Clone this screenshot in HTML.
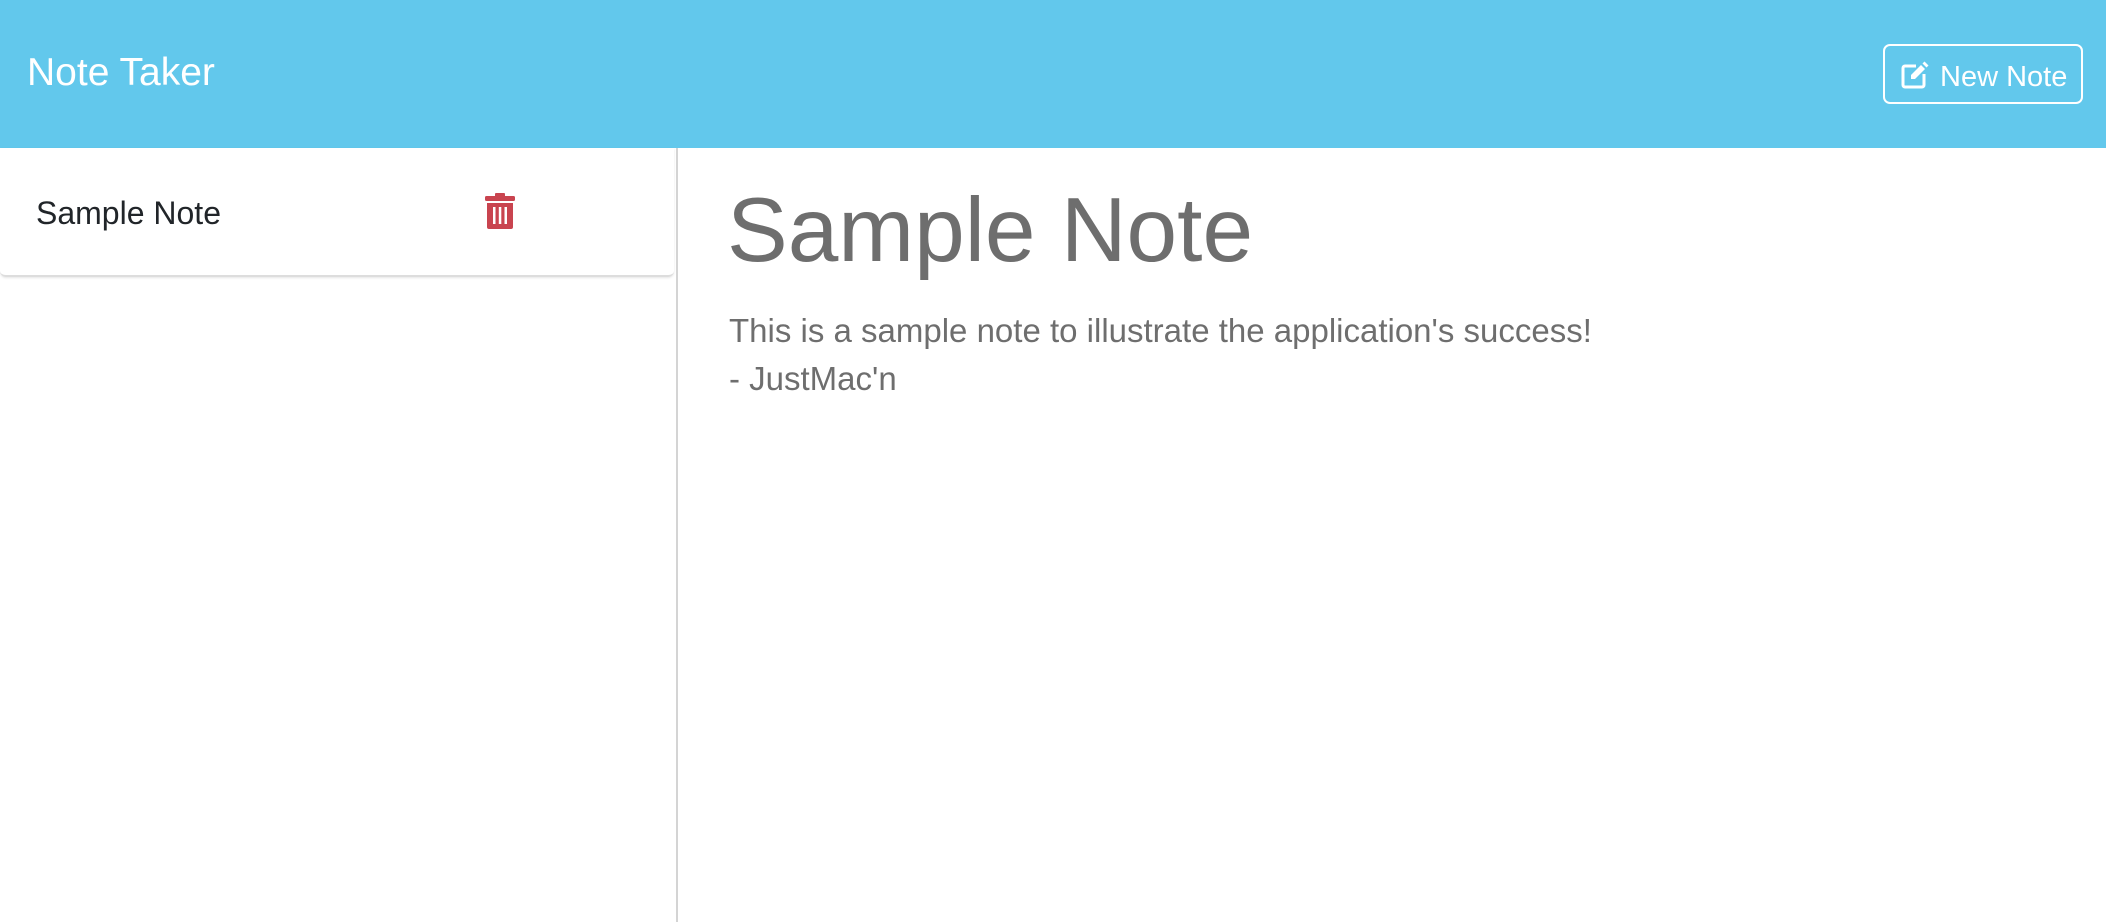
<!DOCTYPE html>
<html><head><style>
body{margin:0;width:2106px;height:922px;overflow:hidden;font-family:"Liberation Sans",sans-serif;background:#fff;position:relative}
.hdr{position:absolute;left:0;top:0;width:2106px;height:148px;background:#62c8ec}
.brand{position:absolute;left:27px;top:51px;font-size:39px;color:#fff}
.btn{position:absolute;left:1883px;top:44px;width:196px;height:56px;border:2px solid #fff;border-radius:7px;color:#fff;font-size:29px;line-height:56px}
.btn svg{position:absolute;left:16px;top:15px}
.btn span{position:absolute;left:55px;top:3px}
.side{position:absolute;left:0;top:148px;width:678px;height:774px;border-right:2px solid #d4d4d4;box-sizing:border-box}
.item{position:absolute;left:0;top:0;width:674px;height:127px;border-bottom:2px solid #ddd;border-radius:0 0 6px 6px;box-shadow:0 1px 2px rgba(0,0,0,.1)}
.item .t{position:absolute;left:36px;top:47px;font-size:32px;color:#212529}
.item svg{position:absolute;left:484px;top:45px}
h1{position:absolute;left:727px;top:185px;margin:0;font-weight:normal;font-size:91px;color:#6e6e6e;line-height:1}
.body{position:absolute;left:729px;top:307px;font-size:33px;line-height:48px;color:#6e6e6e}
</style></head><body>
<div class="hdr"><div class="brand">Note Taker</div>
<div class="btn"><svg width="28" height="28" viewBox="0 0 28 28"><path d="M15 5H4a2 2 0 0 0-2 2v17a2 2 0 0 0 2 2h17a2 2 0 0 0 2-2V13" fill="none" stroke="#fff" stroke-width="3"/><path d="M10 14l10-10 4 4-10 10h-4z" fill="#fff"/><path d="M21.5 2.5l2-2 4 4-2 2z" fill="#fff"/></svg><span>New Note</span></div></div>
<div class="side"><div class="item"><div class="t">Sample Note</div>
<svg width="32" height="36" viewBox="0 0 32 36"><rect x="1" y="3" width="30" height="5" rx="1.5" fill="#c9444f"/><rect x="11" y="0" width="10" height="4" rx="1" fill="#c9444f"/><path d="M3 10h26v24a2 2 0 0 1-2 2H5a2 2 0 0 1-2-2z" fill="#c9444f"/><rect x="9" y="14" width="2.5" height="17" fill="#fff"/><rect x="14.8" y="14" width="2.5" height="17" fill="#fff"/><rect x="20.5" y="14" width="2.5" height="17" fill="#fff"/></svg></div></div>
<h1>Sample Note</h1>
<div class="body">This is a sample note to illustrate the application's success!<br>- JustMac'n</div>
</body></html>
